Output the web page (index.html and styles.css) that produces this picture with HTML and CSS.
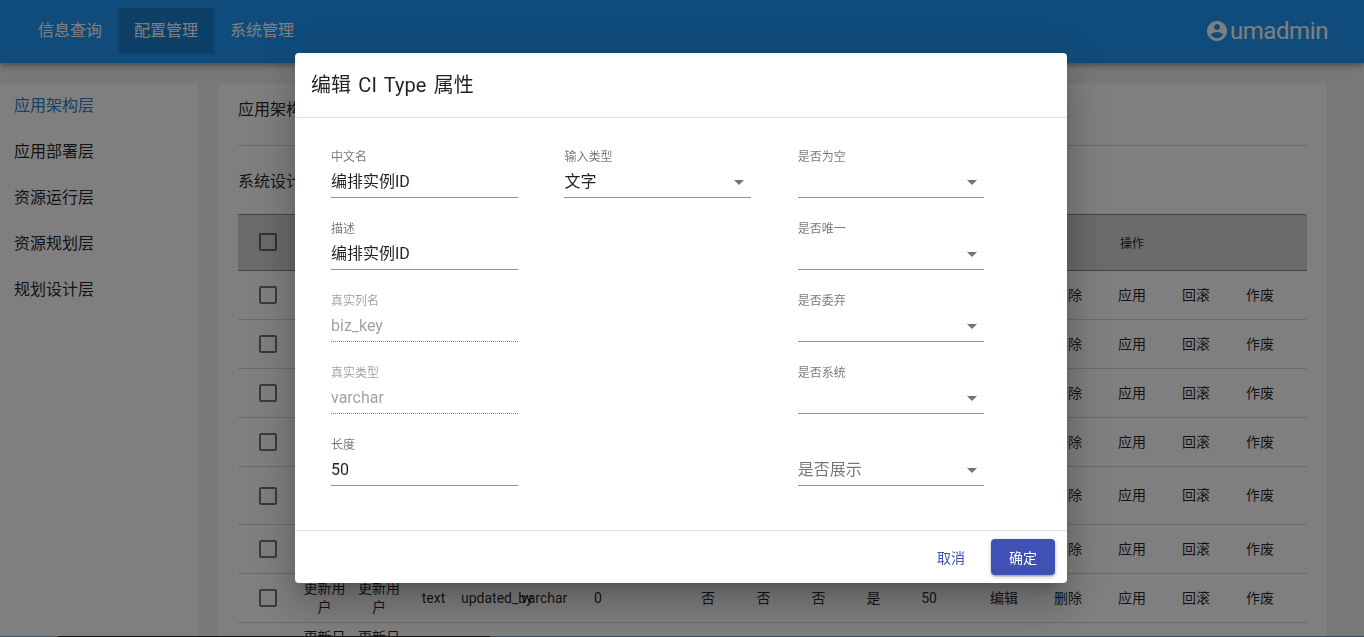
FILE: index.html
```html
<!DOCTYPE html>
<html lang="zh">
<head>
<meta charset="utf-8">
<title>编辑 CI Type 属性</title>
<link rel="stylesheet" href="styles.css">
</head>
<body>
<header class="topbar">
  <nav class="nav">
    <a class="nav-item">信息查询</a>
    <a class="nav-item nav-active">配置管理</a>
    <a class="nav-item">系统管理</a>
  </nav>
  <div class="user">
    <svg class="user-icon" viewBox="0 0 24 24"><path d="M12 2C6.48 2 2 6.48 2 12s4.48 10 10 10 10-4.48 10-10S17.52 2 12 2zm0 3c1.66 0 3 1.34 3 3s-1.34 3-3 3-3-1.34-3-3 1.34-3 3-3zm0 14.2c-2.5 0-4.71-1.28-6-3.22.03-1.99 4-3.08 6-3.08 1.99 0 5.97 1.09 6 3.08-1.29 1.94-3.5 3.22-6 3.22z"/></svg>
    <span>umadmin</span>
  </div>
</header>

<div class="shell">
  <aside class="side">
    <div class="side-item side-active">应用架构层</div>
    <div class="side-item">应用部署层</div>
    <div class="side-item">资源运行层</div>
    <div class="side-item">资源规划层</div>
    <div class="side-item">规划设计层</div>
  </aside>
  <main class="card">
    <div class="crumb">应用架构层 / 系统设计</div>
    <div class="sub">系统设计 CI 属性</div>
    <table class="grid">
      <colgroup>
        <col class="c60"><col class="c53"><col class="c56"><col class="c53"><col class="c60"><col class="c48"><col class="c60"><col class="c52"><col class="c56"><col class="c55"><col class="c55"><col class="c55"><col class="c56"><col class="c350">
      </colgroup>
      <thead>
        <tr>
          <th><svg class="check check-head" viewBox="0 0 24 24"><path d="M19 5v14H5V5h14m0-2H5c-1.1 0-2 .9-2 2v14c0 1.1.9 2 2 2h14c1.1 0 2-.9 2-2V5c0-1.1-.9-2-2-2z"/></svg></th>
          <th>中文名</th><th>描述</th><th>输入类型</th><th>真实列名</th><th>真实类型</th><th>长度</th><th></th><th>是否为空</th><th>是否唯一</th><th>是否委弃</th><th>是否系统</th><th>是否展示</th><th class="th-ops">操作</th>
        </tr>
      </thead>
      <tbody>
        <tr>
          <td><svg class="check" viewBox="0 0 24 24"><path d="M19 5v14H5V5h14m0-2H5c-1.1 0-2 .9-2 2v14c0 1.1.9 2 2 2h14c1.1 0 2-.9 2-2V5c0-1.1-.9-2-2-2z"/></svg></td>
          <td>编排实例ID</td><td>编排实例ID</td><td>text</td><td>biz_key</td><td>varchar</td><td>50</td><td></td><td>否</td><td>否</td><td>否</td><td>是</td><td>50</td>
          <td><div class="ops"><span>编辑</span><span>删除</span><span>应用</span><span>回滚</span><span>作废</span></div></td>
        </tr>
        <tr>
          <td><svg class="check" viewBox="0 0 24 24"><path d="M19 5v14H5V5h14m0-2H5c-1.1 0-2 .9-2 2v14c0 1.1.9 2 2 2h14c1.1 0 2-.9 2-2V5c0-1.1-.9-2-2-2z"/></svg></td>
          <td>名称</td><td>名称</td><td>text</td><td>name</td><td>varchar</td><td>50</td><td></td><td>否</td><td>否</td><td>否</td><td>是</td><td>50</td>
          <td><div class="ops"><span>编辑</span><span>删除</span><span>应用</span><span>回滚</span><span>作废</span></div></td>
        </tr>
        <tr>
          <td><svg class="check" viewBox="0 0 24 24"><path d="M19 5v14H5V5h14m0-2H5c-1.1 0-2 .9-2 2v14c0 1.1.9 2 2 2h14c1.1 0 2-.9 2-2V5c0-1.1-.9-2-2-2z"/></svg></td>
          <td>描述</td><td>描述</td><td>text</td><td>desc</td><td>varchar</td><td>50</td><td></td><td>否</td><td>否</td><td>否</td><td>是</td><td>50</td>
          <td><div class="ops"><span>编辑</span><span>删除</span><span>应用</span><span>回滚</span><span>作废</span></div></td>
        </tr>
        <tr>
          <td><svg class="check" viewBox="0 0 24 24"><path d="M19 5v14H5V5h14m0-2H5c-1.1 0-2 .9-2 2v14c0 1.1.9 2 2 2h14c1.1 0 2-.9 2-2V5c0-1.1-.9-2-2-2z"/></svg></td>
          <td>状态</td><td>状态</td><td>text</td><td>state</td><td>varchar</td><td>50</td><td></td><td>否</td><td>否</td><td>否</td><td>是</td><td>50</td>
          <td><div class="ops"><span>编辑</span><span>删除</span><span>应用</span><span>回滚</span><span>作废</span></div></td>
        </tr>
        <tr>
          <td><svg class="check" viewBox="0 0 24 24"><path d="M19 5v14H5V5h14m0-2H5c-1.1 0-2 .9-2 2v14c0 1.1.9 2 2 2h14c1.1 0 2-.9 2-2V5c0-1.1-.9-2-2-2z"/></svg></td>
          <td>流程编排实例名称</td><td>流程编排实例名称</td><td>text</td><td>flow</td><td>varchar</td><td>50</td><td></td><td>否</td><td>否</td><td>否</td><td>是</td><td>50</td>
          <td><div class="ops"><span>编辑</span><span>删除</span><span>应用</span><span>回滚</span><span>作废</span></div></td>
        </tr>
        <tr>
          <td><svg class="check" viewBox="0 0 24 24"><path d="M19 5v14H5V5h14m0-2H5c-1.1 0-2 .9-2 2v14c0 1.1.9 2 2 2h14c1.1 0 2-.9 2-2V5c0-1.1-.9-2-2-2z"/></svg></td>
          <td>创建用户</td><td>创建用户</td><td>text</td><td>created_by</td><td>varchar</td><td>0</td><td></td><td>否</td><td>否</td><td>否</td><td>是</td><td>50</td>
          <td><div class="ops"><span>编辑</span><span>删除</span><span>应用</span><span>回滚</span><span>作废</span></div></td>
        </tr>
        <tr>
          <td><svg class="check" viewBox="0 0 24 24"><path d="M19 5v14H5V5h14m0-2H5c-1.1 0-2 .9-2 2v14c0 1.1.9 2 2 2h14c1.1 0 2-.9 2-2V5c0-1.1-.9-2-2-2z"/></svg></td>
          <td>更新用户</td><td>更新用户</td><td>text</td><td class="nowrap">updated_by</td><td>varchar</td><td>0</td><td></td><td>否</td><td>否</td><td>否</td><td>是</td><td>50</td>
          <td><div class="ops"><span>编辑</span><span>删除</span><span>应用</span><span>回滚</span><span>作废</span></div></td>
        </tr>
        <tr>
          <td><svg class="check" viewBox="0 0 24 24"><path d="M19 5v14H5V5h14m0-2H5c-1.1 0-2 .9-2 2v14c0 1.1.9 2 2 2h14c1.1 0 2-.9 2-2V5c0-1.1-.9-2-2-2z"/></svg></td>
          <td>更新日期</td><td>更新日期</td><td>text</td><td class="nowrap">updated_date</td><td>varchar</td><td>0</td><td></td><td>否</td><td>否</td><td>否</td><td>是</td><td>50</td>
          <td><div class="ops"><span>编辑</span><span>删除</span><span>应用</span><span>回滚</span><span>作废</span></div></td>
        </tr>
      </tbody>
    </table>
  </main>
</div>

<div class="backdrop">
  <section class="dialog">
    <h2 class="dialog-title">编辑 CI Type 属性</h2>
    <div class="dialog-body">
      <div class="col">
        <div class="field"><label class="label">中文名</label><div class="control">编排实例ID</div></div>
        <div class="field"><label class="label">描述</label><div class="control">编排实例ID</div></div>
        <div class="field is-disabled"><label class="label">真实列名</label><div class="control">biz_key</div></div>
        <div class="field is-disabled"><label class="label">真实类型</label><div class="control">varchar</div></div>
        <div class="field"><label class="label">长度</label><div class="control">50</div></div>
      </div>
      <div class="col">
        <div class="field"><label class="label">输入类型</label><div class="control">文字<svg class="arrow" viewBox="0 0 24 24"><path d="M7 10l5 5 5-5z"/></svg></div></div>
      </div>
      <div class="col">
        <div class="field"><label class="label">是否为空</label><div class="control"><svg class="arrow" viewBox="0 0 24 24"><path d="M7 10l5 5 5-5z"/></svg></div></div>
        <div class="field"><label class="label">是否唯一</label><div class="control"><svg class="arrow" viewBox="0 0 24 24"><path d="M7 10l5 5 5-5z"/></svg></div></div>
        <div class="field"><label class="label">是否委弃</label><div class="control"><svg class="arrow" viewBox="0 0 24 24"><path d="M7 10l5 5 5-5z"/></svg></div></div>
        <div class="field"><label class="label">是否系统</label><div class="control"><svg class="arrow" viewBox="0 0 24 24"><path d="M7 10l5 5 5-5z"/></svg></div></div>
        <div class="field"><div class="control is-placeholder">是否展示<svg class="arrow" viewBox="0 0 24 24"><path d="M7 10l5 5 5-5z"/></svg></div></div>
      </div>
    </div>
    <footer class="dialog-actions">
      <button class="btn btn-text">取消</button>
      <button class="btn btn-primary">确定</button>
    </footer>
  </section>
</div>
<div class="edge"></div>
</body>
</html>
```
FILE: styles.css
```css
* { box-sizing: border-box; }
html, body { height: 100%; }
body {
  margin: 0;
  height: 637px;
  overflow: hidden;
  background: #f0f0f0;
  color: rgba(0, 0, 0, .87);
  font-family: Roboto, "Noto Sans CJK SC", sans-serif;
  font-size: 16px;
}

.topbar {
  height: 63px;
  display: flex;
  justify-content: space-between;
  padding: 0 36px 0 22px;
  background: #1f99f7;
  box-shadow: 0 2px 4px -1px rgba(0, 0, 0, .2), 0 4px 5px rgba(0, 0, 0, .14), 0 1px 10px rgba(0, 0, 0, .12);
}
.nav { display: flex; padding-top: 8px; }
.nav-item {
  width: 96px;
  height: 46px;
  line-height: 46px;
  text-align: center;
  color: #fff;
}
.nav-active { background: #1c80ce; }
.user { display: flex; align-items: center; color: #fff; font-size: 24px; letter-spacing: -.42px; padding-bottom: 2px; }
.user-icon { width: 24px; height: 24px; fill: #fff; margin-right: 1px; }

.shell { display: flex; gap: 20px; padding-top: 20px; height: 574px; }
.side { width: 198px; background: #fff; flex: none; }
.side-item { height: 46px; padding: 0 14px; line-height: 46px; }
.side-active { color: #2f80d0; }

.card {
  width: 1109px;
  flex: none;
  background: #fff;
  border-radius: 4px;
  padding: 15px 20px 0;
}
.crumb { height: 48px; line-height: 24px; border-bottom: 1px solid #d6d6d6; }
.sub { margin: 24px 0 20px; line-height: 24px; }

.grid {
  width: 1069px;
  table-layout: fixed;
  border-collapse: separate;
  border-spacing: 0;
  font-size: 14px;
  line-height: 19px;
  text-align: center;
}
.c48 { width: 48px; }
.c52 { width: 52px; }
.c53 { width: 53px; }
.c55 { width: 55px; }
.c56 { width: 56px; }
.c60 { width: 60px; }
.c350 { width: 350px; }
.grid th {
  height: 57px;
  padding: 0;
  background: #d6d6d6;
  border-top: 1px solid #888;
  border-bottom: 1px solid #888;
  font-size: 12px;
  font-weight: 400;
}
.grid .th-ops { padding-top: 3px; border-top-right-radius: 3px; }
.grid td { height: 49px; padding: 0 1px; border-bottom: 1px solid #d6d6d6; }
.nowrap { white-space: nowrap; text-align: left; }
.check { display: block; width: 24px; height: 24px; margin: 0 auto; fill: rgba(0, 0, 0, .54); }
.check-head { margin-top: -1px; }
.ops { display: flex; justify-content: center; }
.ops span { width: 64px; flex: none; }

.backdrop {
  position: fixed;
  inset: 0;
  display: flex;
  align-items: flex-start;
  padding: 53px 0 0 295px;
  background: rgba(0, 0, 0, .5);
}
.dialog {
  width: 772px;
  height: 530px;
  background: #fff;
  border-radius: 4px;
  box-shadow: 0 11px 15px -7px rgba(0, 0, 0, .2), 0 24px 38px 3px rgba(0, 0, 0, .14), 0 9px 46px 8px rgba(0, 0, 0, .12);
}
.dialog-title {
  margin: 0;
  height: 65px;
  padding: 17px 16px 0;
  border-bottom: 1px solid #e0e0e0;
  font-size: 20px;
  line-height: 30px;
  font-weight: 400;
  word-spacing: 2.4px;
}
.dialog-body {
  display: grid;
  grid-template-columns: 187px 187px 186px;
  column-gap: 46.4px;
  height: 413px;
  padding: 8px 0 0 36px;
  border-bottom: 1px solid #e0e0e0;
}
.field { height: 72px; display: flex; flex-direction: column; justify-content: flex-end; }
.label { font-size: 12px; line-height: 14px; margin-bottom: 2px; color: rgba(0, 0, 0, .54); }
.control {
  position: relative;
  height: 32px;
  line-height: 32px;
  border-bottom: 1px solid rgba(0, 0, 0, .42);
  color: rgba(0, 0, 0, .87);
}
.is-disabled .label { color: rgba(0, 0, 0, .38); }
.is-disabled .control { color: rgba(0, 0, 0, .38); border-bottom: 1px dotted rgba(0, 0, 0, .5); }
.control.is-placeholder { color: rgba(0, 0, 0, .54); }
.arrow { position: absolute; right: 0; top: 4px; width: 24px; height: 24px; fill: rgba(0, 0, 0, .54); }

.dialog-actions { display: flex; justify-content: flex-end; gap: 8px; padding: 8px 12px; }
.btn {
  width: 64px;
  height: 36px;
  border: 0;
  border-radius: 4px;
  font-family: inherit;
  font-size: 14px;
  padding: 0;
}
.btn-text { background: transparent; color: #3f51b5; }
.btn-primary {
  background: #3f51b5;
  color: #fff;
  box-shadow: 0 1px 5px rgba(0, 0, 0, .2), 0 2px 2px rgba(0, 0, 0, .14), 0 3px 1px -2px rgba(0, 0, 0, .12);
}
.edge {
  position: fixed;
  left: 0;
  right: 0;
  bottom: 0;
  height: 1px;
  background: linear-gradient(90deg, #4a5560 0 58px, #151515 58px 490px, #3a4c5c 490px);
}
```
